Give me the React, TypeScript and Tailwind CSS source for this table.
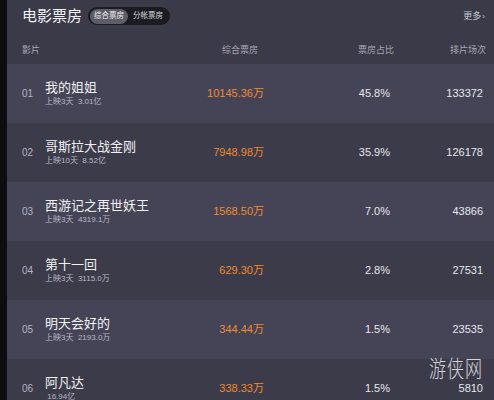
import React from "react";

type Row = { no: string; name: string; sub: string; rev: string; pct: string; cnt: string };

const rows: Row[] = [
  { no: "01", name: "我的姐姐", sub: "上映3天  3.01亿", rev: "10145.36万", pct: "45.8%", cnt: "133372" },
  { no: "02", name: "哥斯拉大战金刚", sub: "上映10天  8.52亿", rev: "7948.98万", pct: "35.9%", cnt: "126178" },
  { no: "03", name: "西游记之再世妖王", sub: "上映3天  4319.1万", rev: "1568.50万", pct: "7.0%", cnt: "43866" },
  { no: "04", name: "第十一回", sub: "上映3天  3115.0万", rev: "629.30万", pct: "2.8%", cnt: "27531" },
  { no: "05", name: "明天会好的", sub: "上映3天  2193.0万", rev: "344.44万", pct: "1.5%", cnt: "23535" },
  { no: "06", name: "阿凡达", sub: " 16.94亿", rev: "338.33万", pct: "1.5%", cnt: "5810" },
];

const font = { fontFamily: '"Liberation Sans", "Noto Sans CJK SC", sans-serif' };

export default function App() {
  return (
    <div className="relative flex h-[400px] w-[494px] overflow-hidden bg-[#3b3a48]" style={font}>
      <div className="w-[7px] shrink-0 bg-[#0d0d10]" />
      <div className="flex flex-1 flex-col">
        {/* Top header */}
        <div className="flex h-[38px] shrink-0 items-start pl-[15px] pr-[9px] pt-[6px]">
          <div className="text-[15px] leading-[20px] text-[#f2f2f4]">电影票房</div>
          <div className="ml-[6px] mt-[1px] flex h-[18px] items-center rounded-full bg-[#1c1b22] px-[2px]">
            <div className="flex h-[15px] items-center rounded-full bg-[#5d5c68] px-[4px] text-[7.5px] text-[#f0f0f0]">
              综合票房
            </div>
            <div className="flex h-[15px] items-center px-[5px] text-[7.5px] text-[#d8d8de]">分帐票房</div>
          </div>
          <div className="ml-auto mt-[4px] flex items-center text-[9px] text-[#c9c8d2]">
            更多<span className="ml-[1px] text-[8px]">›</span>
          </div>
        </div>
        {/* Column header */}
        <div className="flex h-[26px] shrink-0 items-center pl-[15px] pr-[8px] text-[9px] text-[#a9a8b6]">
          <div className="flex-1">影片</div>
          <div className="w-[100px] text-right">综合票房</div>
          <div className="w-[136px] text-right">票房占比</div>
          <div className="w-[92px] text-right">排片场次</div>
        </div>
        {/* Rows */}
        {rows.map((r, i) => (
          <div
            key={r.no}
            className={
              "flex h-[59px] shrink-0 items-center pl-[15px] pr-[11px] " +
              (i % 2 === 0 ? "bg-[#454457]" : "bg-[#3c3b4a]")
            }
          >
            <div className="flex flex-1 items-center">
              <div className="w-[23px] text-[10px] text-[#b4b3c0]">{r.no}</div>
              <div className="flex flex-col">
                <div className="text-[13px] leading-[15px] text-[#f0f0f2]">{r.name}</div>
                <div className="mt-[2px] whitespace-pre text-[8px] leading-[10px] text-[#b9b8c4]">{r.sub}</div>
              </div>
            </div>
            <div className="w-[100px] text-right text-[11px] text-[#f08a2c]">{r.rev}</div>
            <div className="w-[126px] text-right text-[11px] text-[#e6e6ec]">{r.pct}</div>
            <div className="w-[93px] text-right text-[11px] text-[#e6e6ec]">{r.cnt}</div>
          </div>
        ))}
      </div>
      <div
        className="absolute left-[429px] top-[354px] origin-top scale-y-[1.35] whitespace-nowrap text-[17px] leading-[20px] tracking-[1px] text-[#eeeeee] opacity-85"
        style={{ fontFamily: '"Noto Sans CJK SC", sans-serif', fontWeight: 200 }}
      >
        游侠网
      </div>
    </div>
  );
}
